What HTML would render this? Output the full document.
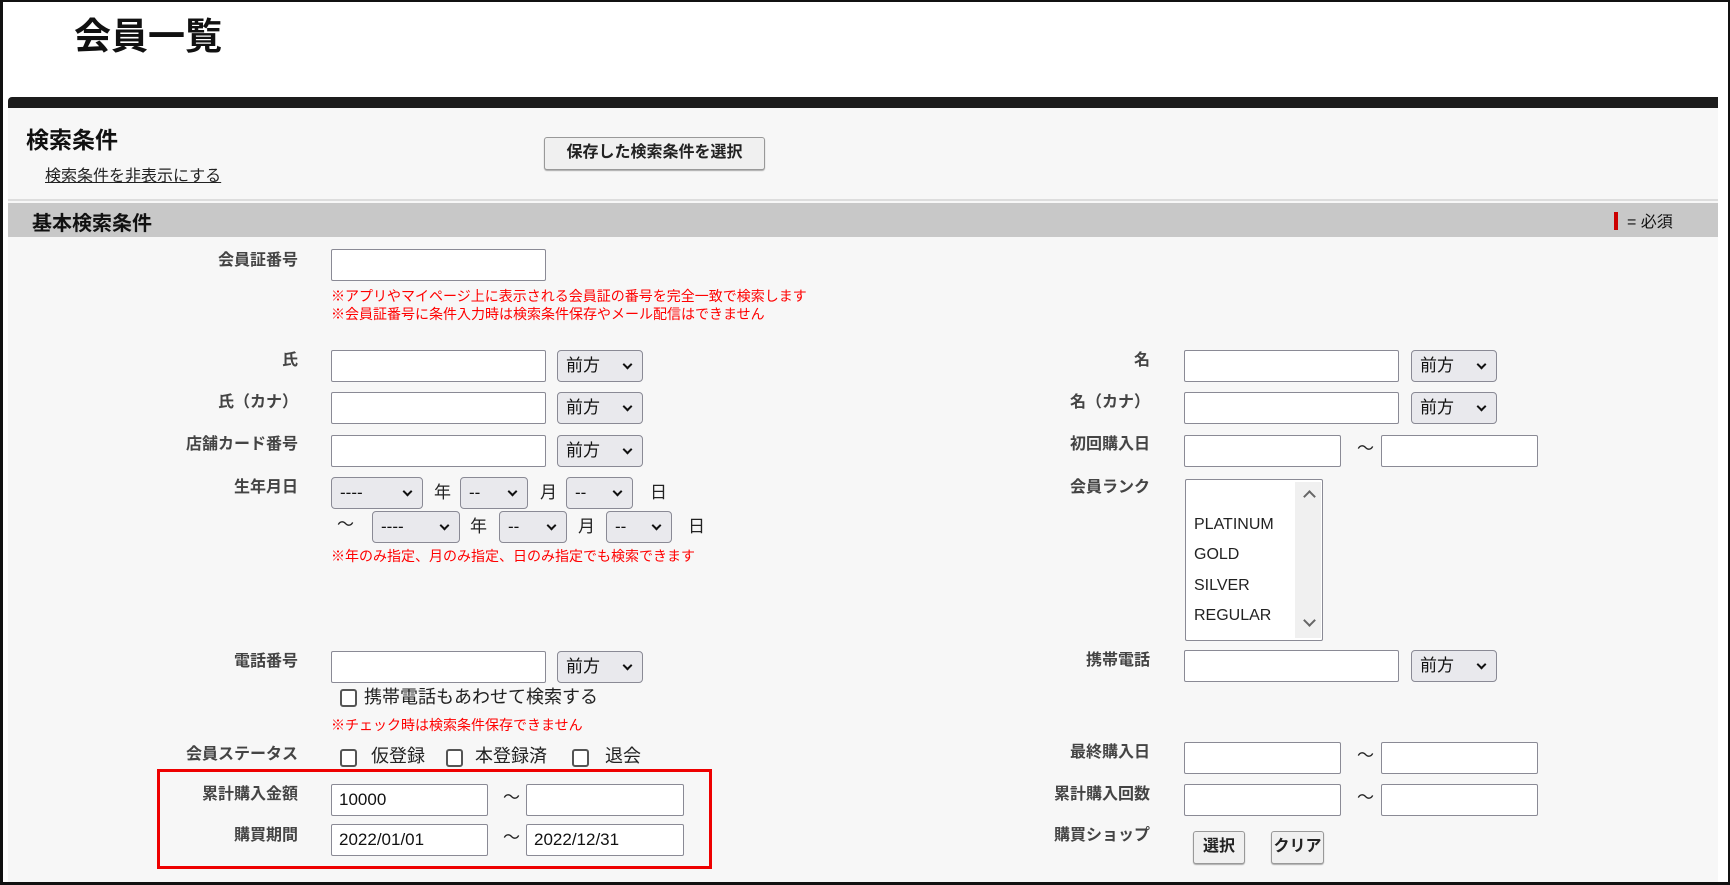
<!DOCTYPE html>
<html><head><meta charset="utf-8"><style>
*{box-sizing:border-box;margin:0;padding:0}
body{width:1730px;height:885px;background:#fff;position:relative;overflow:hidden;font-family:"Liberation Sans","Noto Sans CJK JP",sans-serif;color:#222}
.a{position:absolute;white-space:nowrap}
.frame{position:absolute;left:0;top:0;width:1730px;height:885px;border:2px solid #111;border-left-width:3px;border-bottom-width:3px}
.lbl{position:absolute;font-size:16px;font-weight:bold;color:#444;text-align:right;white-space:nowrap;line-height:20px}
.in{position:absolute;background:#fff;border:1px solid #8a8a95;border-radius:2px;height:32px;font-size:17px;padding-left:7px;line-height:30px;color:#111}
.sel{position:absolute;background:#e9e9ed;border:1px solid #8a8a95;border-radius:4px;height:32px;font-size:17px;padding-left:8px;line-height:30px;color:#111}
.sel:after{content:"";position:absolute;right:11px;top:10px;width:5px;height:5px;border-right:2px solid #111;border-bottom:2px solid #111;transform:rotate(45deg)}
.red{position:absolute;color:#f00;font-size:14px;line-height:16px;white-space:nowrap}
.cb{position:absolute;width:17px;height:18px;border:2px solid #555;border-radius:3px;background:#fff}
.t{position:absolute;font-size:17px;white-space:nowrap;line-height:20px}
.btn{position:absolute;background:#f0f0f0;border:1px solid #999;border-radius:3px;font-weight:bold;font-size:16px;text-align:center;line-height:30px;box-shadow:0 1px 1px #aaa}
</style></head><body>
<div class="a" style="left:74px;top:6px;font-size:37px;font-weight:bold;color:#111">会員一覧</div>
<div class="a" style="left:8px;top:97px;width:1710px;height:11px;background:#1c1c1c;border-radius:4px 0 0 0"></div>
<div class="a" style="left:8px;top:108px;width:1710px;height:774px;background:#f7f7f7"></div>
<div class="a" style="left:26px;top:121px;font-size:23px;font-weight:bold;color:#111">検索条件</div>
<div class="a" style="left:45px;top:162px;font-size:16px;color:#222;text-decoration:underline">検索条件を非表示にする</div>
<div class="btn" style="left:544px;top:137px;width:221px;height:33px">保存した検索条件を選択</div>
<div class="a" style="left:8px;top:199px;width:1710px;height:2px;background:#ddd"></div>
<div class="a" style="left:8px;top:203px;width:1710px;height:34px;background:#c8c8c8"></div>
<div class="a" style="left:32px;top:207px;font-size:20px;font-weight:bold;color:#111">基本検索条件</div>
<div class="a" style="left:1614px;top:212px;width:4px;height:18px;background:#c00"></div>
<div class="a" style="left:1627px;top:208px;font-size:16px;color:#111">= 必須</div>

<div class="lbl" style="right:1432px;top:251px">会員証番号</div>
<div class="in" style="left:331px;top:249px;width:215px"></div>
<div class="red" style="left:331px;top:288px">※アプリやマイページ上に表示される会員証の番号を完全一致で検索します</div>
<div class="red" style="left:331px;top:306px">※会員証番号に条件入力時は検索条件保存やメール配信はできません</div>

<div class="lbl" style="right:1432px;top:351px">氏</div>
<div class="in" style="left:331px;top:350px;width:215px"></div>
<div class="sel" style="left:557px;top:350px;width:86px">前方</div>
<div class="lbl" style="right:1432px;top:393px">氏（カナ）</div>
<div class="in" style="left:331px;top:392px;width:215px"></div>
<div class="sel" style="left:557px;top:392px;width:86px">前方</div>
<div class="lbl" style="right:1432px;top:435px">店舗カード番号</div>
<div class="in" style="left:331px;top:435px;width:215px"></div>
<div class="sel" style="left:557px;top:435px;width:86px">前方</div>

<div class="lbl" style="right:1432px;top:478px">生年月日</div>
<div class="sel" style="left:331px;top:477px;width:92px">----</div>
<div class="t" style="left:434px;top:483px">年</div>
<div class="sel" style="left:460px;top:477px;width:68px">--</div>
<div class="t" style="left:540px;top:483px">月</div>
<div class="sel" style="left:566px;top:477px;width:67px">--</div>
<div class="t" style="left:650px;top:483px">日</div>
<div class="t" style="left:337px;top:515px">～</div>
<div class="sel" style="left:372px;top:511px;width:88px">----</div>
<div class="t" style="left:470px;top:517px">年</div>
<div class="sel" style="left:499px;top:511px;width:68px">--</div>
<div class="t" style="left:578px;top:517px">月</div>
<div class="sel" style="left:606px;top:511px;width:66px">--</div>
<div class="t" style="left:688px;top:517px">日</div>
<div class="red" style="left:331px;top:548px">※年のみ指定、月のみ指定、日のみ指定でも検索できます</div>

<div class="lbl" style="right:1432px;top:652px">電話番号</div>
<div class="in" style="left:331px;top:651px;width:215px"></div>
<div class="sel" style="left:557px;top:651px;width:86px">前方</div>
<div class="cb" style="left:340px;top:689px"></div>
<div class="t" style="left:364px;top:687px;font-size:18px">携帯電話もあわせて検索する</div>
<div class="red" style="left:331px;top:717px">※チェック時は検索条件保存できません</div>

<div class="lbl" style="right:1432px;top:745px">会員ステータス</div>
<div class="cb" style="left:340px;top:749px"></div><div class="t" style="left:371px;top:746px;font-size:18px">仮登録</div>
<div class="cb" style="left:446px;top:749px"></div><div class="t" style="left:475px;top:746px;font-size:18px">本登録済</div>
<div class="cb" style="left:572px;top:749px"></div><div class="t" style="left:605px;top:746px;font-size:18px">退会</div>

<div class="a" style="left:157px;top:769px;width:555px;height:100px;border:3px solid #e00"></div>
<div class="lbl" style="right:1432px;top:785px">累計購入金額</div>
<div class="in" style="left:331px;top:784px;width:157px">10000</div>
<div class="t" style="left:503px;top:788px">～</div>
<div class="in" style="left:526px;top:784px;width:158px"></div>
<div class="lbl" style="right:1432px;top:826px">購買期間</div>
<div class="in" style="left:331px;top:824px;width:157px">2022/01/01</div>
<div class="t" style="left:503px;top:828px">～</div>
<div class="in" style="left:526px;top:824px;width:158px">2022/12/31</div>

<div class="lbl" style="right:580px;top:351px">名</div>
<div class="in" style="left:1184px;top:350px;width:215px"></div>
<div class="sel" style="left:1411px;top:350px;width:86px">前方</div>
<div class="lbl" style="right:580px;top:393px">名（カナ）</div>
<div class="in" style="left:1184px;top:392px;width:215px"></div>
<div class="sel" style="left:1411px;top:392px;width:86px">前方</div>
<div class="lbl" style="right:580px;top:435px">初回購入日</div>
<div class="in" style="left:1184px;top:435px;width:157px"></div>
<div class="t" style="left:1357px;top:439px">～</div>
<div class="in" style="left:1381px;top:435px;width:157px"></div>
<div class="lbl" style="right:580px;top:478px">会員ランク</div>
<div class="a" style="left:1185px;top:479px;width:138px;height:162px;background:#fff;border:1px solid #8a8a95;border-radius:2px">
<div class="a" style="right:1px;top:2px;width:26px;height:156px;background:#f0f0f0"></div>
<div class="a" style="right:8px;top:12px;width:9px;height:9px;border-left:2px solid #666;border-top:2px solid #666;transform:rotate(45deg)"></div>
<div class="a" style="right:8px;top:136px;width:9px;height:9px;border-right:2px solid #666;border-bottom:2px solid #666;transform:rotate(45deg)"></div>
<div class="t" style="left:8px;top:35px;font-size:16px">PLATINUM</div>
<div class="t" style="left:8px;top:65px;font-size:16px">GOLD</div>
<div class="t" style="left:8px;top:96px;font-size:16px">SILVER</div>
<div class="t" style="left:8px;top:126px;font-size:16px">REGULAR</div>
</div>
<div class="lbl" style="right:580px;top:651px">携帯電話</div>
<div class="in" style="left:1184px;top:650px;width:215px"></div>
<div class="sel" style="left:1411px;top:650px;width:86px">前方</div>
<div class="lbl" style="right:580px;top:743px">最終購入日</div>
<div class="in" style="left:1184px;top:742px;width:157px"></div>
<div class="t" style="left:1357px;top:746px">～</div>
<div class="in" style="left:1381px;top:742px;width:157px"></div>
<div class="lbl" style="right:580px;top:785px">累計購入回数</div>
<div class="in" style="left:1184px;top:784px;width:157px"></div>
<div class="t" style="left:1357px;top:788px">～</div>
<div class="in" style="left:1381px;top:784px;width:157px"></div>
<div class="lbl" style="right:580px;top:826px">購買ショップ</div>
<div class="btn" style="left:1193px;top:831px;width:52px;height:33px">選択</div>
<div class="btn" style="left:1271px;top:831px;width:53px;height:33px">クリア</div>
<div class="frame"></div>
</body></html>
